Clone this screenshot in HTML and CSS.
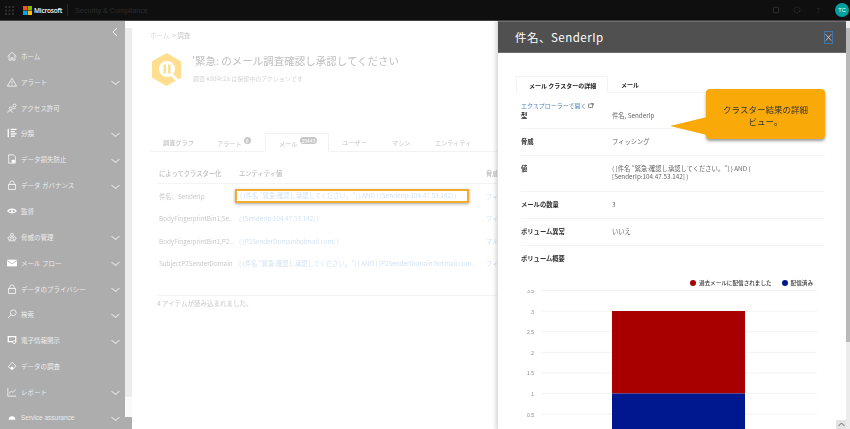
FILE: index.html
```html
<!DOCTYPE html>
<html lang="ja">
<head>
    <meta charset="UTF-8">
    <title>Security &amp; Compliance</title>
    <link rel="stylesheet" href="styles.css">
</head>
<body>
    <header class="topbar">
        <svg class="waffle" width="9" height="9" viewBox="0 0 9 9"><g fill="#2e2e2e"><rect width="2" height="2"/><rect x="3.500" width="2" height="2"/><rect x="7" width="2" height="2"/><rect y="3.500" width="2" height="2"/><rect x="3.500" y="3.500" width="2" height="2"/><rect x="7" y="3.500" width="2" height="2"/><rect y="7" width="2" height="2"/><rect x="3.500" y="7" width="2" height="2"/><rect x="7" y="7" width="2" height="2"/></g></svg>
        <svg class="ms-logo" width="9" height="9" viewBox="0 0 9 9"><rect width="4.300" height="4.300" fill="#f25022"/><rect x="4.700" width="4.300" height="4.300" fill="#7fba00"/><rect y="4.700" width="4.300" height="4.300" fill="#00a4ef"/><rect x="4.700" y="4.700" width="4.300" height="4.300" fill="#ffb900"/></svg>
        <span class="ms-name">Microsoft</span>
        <span class="top-sep"></span>
        <span class="app-name">Security &amp; Compliance</span>
        <div class="top-right">
            <svg width="8" height="8" viewBox="0 0 8 8"><circle cx="4" cy="4" r="3" fill="none" stroke="#2e2e2e"/></svg>
            <svg width="8" height="8" viewBox="0 0 8 8"><circle cx="4" cy="4" r="3" fill="none" stroke="#2e2e2e" stroke-dasharray="2 1"/></svg>
            <span class="help">?</span>
            <span class="avatar">TC</span>
        </div>
    </header>

    <div class="shell">
        <nav class="sidebar">
            <div class="collapse"><svg width="6" height="10" viewBox="0 0 6 10"><path d="M5 1L1 5l4 4" fill="none" stroke="#fff" stroke-width="1"/></svg></div>
            <ul class="nav">
                <li><svg viewBox="0 0 12 12"><path d="M.8 6.500L6 1.500l5.200 5M2.500 5.500v5.500h2.500V8h2v3h2.500V5.500"/></svg><span>ホーム</span></li>
                <li><svg viewBox="0 0 12 12"><path d="M6 1.500L11.500 11H.5zM6 5v3M6 9v1"/></svg><span>アラート</span><i class="chev"></i></li>
                <li><svg viewBox="0 0 12 12"><circle cx="4.500" cy="6.500" r="1.800"/><path d="M1 11.500c0-3 5-3 6 0"/><circle cx="9" cy="3" r="1.800"/><path d="M7 6.500h3"/></svg><span>アクセス許可</span></li>
                <li><svg viewBox="0 0 12 12"><path class="thick" d="M1.500 1v10M4.500 1.500h7M4.500 4.200h5M4.500 6.900h7M4.500 9.600h5"/></svg><span>分類</span><i class="chev"></i></li>
                <li><svg viewBox="0 0 12 12"><path d="M2 1h6l2 2v8H2z"/><rect class="solid" x="5.500" y="7" width="4" height="3.500"/></svg><span>データ損失防止</span><i class="chev"></i></li>
                <li><svg viewBox="0 0 12 12"><rect x="2" y="5.500" width="8" height="6"/><path d="M3.500 5.500V3.500a2.500 2.500 0 0 1 5 0v2"/></svg><span>データ ガバナンス</span><i class="chev"></i></li>
                <li><svg viewBox="0 0 12 12"><path class="thick" d="M1 6C3 3 9 3 11 6 9 9 3 9 1 6z"/><circle class="solid" cx="6" cy="6" r="1.200"/></svg><span>監督</span></li>
                <li><svg viewBox="0 0 12 12"><circle cx="6" cy="3.500" r="1.800"/><circle cx="3" cy="7.500" r="1.800"/><circle cx="9" cy="7.500" r="1.800"/><path d="M6 5.500v2M2 10.500h8"/></svg><span>脅威の管理</span><i class="chev"></i></li>
                <li><svg viewBox="0 0 12 12"><rect class="solid" y="2" width="12" height="8"/><path class="cut-line" d="M0 3l6 4 6-4"/></svg><span>メール フロー</span><i class="chev"></i></li>
                <li><svg viewBox="0 0 12 12"><rect x="2" y="5.500" width="8" height="6"/><path d="M3.500 5.500V3.500a2.500 2.500 0 0 1 5 0v2"/></svg><span>データのプライバシー</span><i class="chev"></i></li>
                <li><svg viewBox="0 0 12 12"><circle cx="7.500" cy="4.500" r="3.500"/><path d="M5 7L1 11"/></svg><span>検索</span><i class="chev"></i></li>
                <li><svg viewBox="0 0 12 12"><path class="thick" d="M1.500 2h9v6h-9z"/><circle class="knock" cx="8.500" cy="8.500" r="1.800"/></svg><span>電子情報開示</span><i class="chev"></i></li>
                <li><svg viewBox="0 0 12 12"><path d="M6 1.500L11 6l-4.500 4.500L1.500 7z"/><circle class="solid" cx="6" cy="8.500" r="1.800"/></svg><span>データの調査</span></li>
                <li><svg viewBox="0 0 12 12"><path d="M1 1v10h10M2.500 8l2.500-3 2 1.500L10.500 3"/></svg><span>レポート</span><i class="chev"></i></li>
                <li><svg viewBox="0 0 12 12"><path class="solid" d="M2 8a4 4 0 0 1 8 0z"/></svg><span class="cut">Service assurance</span><i class="chev"></i></li>
            </ul>
        </nav>
        <div class="side-scroll"></div>

        <main class="main">
            <div class="crumbs"><span class="crumb-home">ホーム</span> &nbsp;&gt; 調査</div>
            <div class="title-row">
                <svg class="hex" width="29" height="33" viewBox="0 0 29 33">
                    <path d="M14.500 0L29 8.250v16.500L14.500 33 0 24.750V8.250z" fill="#ffdf8f"/>
                    <circle cx="15" cy="16" r="8" fill="#fff"/>
                    <path d="M20 22l5 5" stroke="#fff" stroke-width="3"/>
                    <rect x="11.500" y="11.500" width="2.500" height="9" fill="#ffdf8f"/>
                    <rect x="16" y="11.500" width="2.500" height="9" fill="#ffdf8f"/>
                </svg>
                <div class="title-text">
                    <h1>'緊急: のメール調査確認し承認してください</h1>
                    <p class="subtitle">調査 #8d4c2a は保留中のアクションです</p>
                </div>
            </div>

            <div class="tabs">
                <span class="tab tab-graph">調査グラフ</span>
                <span class="tab tab-alert">アラート<b class="badge">0</b></span>
                <span class="tab tab-mail">メール<b class="badge">29443</b></span>
                <span class="tab tab-user">ユーザー</span>
                <span class="tab tab-machine">マシン</span>
                <span class="tab">エンティティ</span>
            </div>

            <div class="grid">
                <div class="grid-row grid-head"><span>によってクラスター化</span><span>エンティティ値</span><span>脅威</span></div>
                <div class="grid-row grid-first"><span>件名、SenderIp</span><a class="hl">( [件名 "緊急:確認し承認してください。"] ) AND ( [SenderIp:104.47.53.142] )</a><a>フィッシング</a></div>
                <div class="grid-row"><span>BodyFingerprintBin1,Se...</span><a>( [SenderIp:104.47.53.142] )</a><a>フィッシング</a></div>
                <div class="grid-row"><span>BodyFingerprintBin1,P2...</span><a>( [P2SenderDomainhotmail.com] )</a><a>マルウェア</a></div>
                <div class="grid-row"><span>SubjectP2SenderDomain</span><a>( [件名 "緊急:確認し承認してください。"] ) AND ( [P2SenderDomain.hotmail.com...</a><a>フィッシング</a></div>
            </div>
            <div class="loaded">4 アイテムが読み込まれました。</div>
        </main>

        <aside class="panel">
            <div class="panel-head">
                <h2>件名、SenderIp</h2>
                <span class="close"><svg width="9" height="11" viewBox="0 0 9 11"><path d="M1 1.500l7 8M8 1.500l-7 8" stroke="#ddd" fill="none"/></svg></span>
            </div>
            <div class="panel-body">
                <div class="ptabs">
                    <span class="ptab ptab-on">メール クラスターの詳細</span>
                    <span class="ptab">メール</span>
                </div>
                <a class="explore">エクスプローラーで開く <svg width="6" height="5" viewBox="0 0 6 5"><path d="M.5 1h4v3.500h-4zM3 .5h2.500v2" fill="none" stroke="#666" stroke-width=".7"/></svg></a>
                <div class="prow prow-type"><b>型</b><span>件名, SenderIp</span></div>
                <div class="prow prow-threat"><b>脅威</b><span>フィッシング</span></div>
                <div class="prow prow-value"><b>値</b><span>( [件名 "緊急:確認し承認してください。"] ) AND ( [SenderIp:104.47.53.142] )</span></div>
                <div class="prow"><b>メールの数量</b><span>3</span></div>
                <div class="prow"><b>ボリューム異常</b><span>いいえ</span></div>
                <div class="prow prow-last"><b>ボリューム概要</b></div>
                <div class="legend">
                    <i class="dot dot-red"></i><span>過去メールに配信されました</span>
                    <i class="dot dot-blue"></i><span>配信済み</span>
                </div>
                <svg class="chart" width="300" height="150" viewBox="0 0 300 150">
                    <g stroke="#f2f2f2">
                        <path d="M20 .5h276M20 21.100h276M20 41.700h276M20 62.300h276M20 83h276M20 103.500h276M20 124.100h276"/>
                    </g>
                    <g class="ticks" text-anchor="end">
                        <text x="13" y="3">3.5</text>
                        <text x="13" y="24">3</text>
                        <text x="13" y="44">2.5</text>
                        <text x="13" y="65">2</text>
                        <text x="13" y="85">1.5</text>
                        <text x="13" y="106">1</text>
                        <text x="13" y="127">0.5</text>
                    </g>
                    <rect x="91" y="21" width="133" height="82.500" fill="#a80000"/>
                    <rect x="91" y="103.500" width="133" height="50" fill="#00188f"/>
                </svg>
            </div>
            <div class="panel-scroll">
                <span class="scroll-thumb"></span>
            </div>
            <span class="scroll-up"><svg width="7" height="5" viewBox="0 0 7 5"><path d="M.5 4l3-3 3 3" fill="none" stroke="#666"/></svg></span>
        </aside>

        <div class="callout">
            <svg class="callout-tail" width="37" height="18" viewBox="0 0 37 18"><path d="M37 0L0 9l37 9z" fill="#f9a908"/></svg>
            クラスター結果の詳細ビュー。
        </div>
    </div>
</body>
</html>
```

FILE: styles.css
```css
* {
    box-sizing: border-box;
}

html, body {
    margin: 0;
    height: 429px;
    overflow: hidden;
}

body {
    font-family: "Noto Sans CJK JP", "Noto Sans", sans-serif;
    font-size: 6.500px;
    background: #fff;
    display: flex;
    flex-direction: column;
    filter: blur(0.45px);
}

/* top bar */
.topbar {
    height: 21px;
    flex: none;
    background: #0f0f0f;
    border-bottom: 1px solid #444;
    display: flex;
    align-items: center;
    padding-left: 5px;
    color: #fff;
}

.ms-logo {
    margin-left: 9px;
}

.ms-name {
    font-family: "Open Sans", sans-serif;
    font-weight: 600;
    font-size: 6.500px;
    margin-left: 2px;
    letter-spacing: -0.2px;
}

.top-sep {
    width: 1px;
    height: 12px;
    background: #262626;
    margin: 0 7px 0 5px;
}

.app-name {
    font-family: "Liberation Sans", sans-serif;
    font-size: 7.200px;
    color: #2c2c2c;
}

.top-right {
    margin-left: auto;
    display: flex;
    align-items: center;
    gap: 13px;
    padding-right: 1px;
}

.help {
    color: #2e2e2e;
    width: 8px;
    text-align: center;
}

.avatar {
    width: 14px;
    height: 14px;
    border-radius: 50%;
    background: #00a09d;
    font-family: "Liberation Sans", sans-serif;
    font-size: 5.500px;
    line-height: 14px;
    text-align: center;
}

.shell {
    flex: 1;
    display: flex;
    position: relative;
    min-height: 0;
}

/* left nav */
.sidebar {
    width: 125px;
    flex: none;
    background: #adadad;
    color: #ececec;
    overflow: hidden;
}

.collapse {
    height: 22px;
    padding: 6px 0 0 112px;
}

.nav {
    list-style: none;
    margin: 0;
    padding: 0;
}

.nav li {
    height: 25.850px;
    display: flex;
    align-items: center;
    padding-left: 7px;
    font-size: 6.500px;
    white-space: nowrap;
}

.nav svg {
    width: 10px;
    height: 10px;
    flex: none;
    margin-right: 4px;
    fill: none;
    stroke: #fff;
    stroke-width: 0.9;
}

.nav svg .solid {
    fill: #fff;
    stroke: none;
}

.nav svg .thick {
    stroke-width: 1.500;
}

.nav svg .knock {
    fill: #adadad;
}

.nav svg .cut-line {
    stroke: #adadad;
}

.cut {
    font-family: "Liberation Sans", sans-serif;
    font-size: 6.500px;
}

.chev {
    margin-left: auto;
    margin-right: 7px;
    width: 5px;
    height: 5px;
    border-right: 1px solid #ddd;
    border-bottom: 1px solid #ddd;
    transform: scaleX(1.25) rotate(45deg);
}

.side-scroll {
    width: 7px;
    flex: none;
    background: linear-gradient(#fff 0, #fff 7px, #ececec 7px, #ececec 376px, #fafafa 376px, #fafafa 396px, #adadad 396px);
}

/* main page, faded by the overlay */
.main {
    flex: 1;
    min-width: 0;
    padding: 8px 0 0 18px;
    color: #c9c9c9;
    overflow: hidden;
}

.crumbs {
    font-size: 6.500px;
    line-height: 12px;
}

.crumb-home {
    color: #d3d8e6;
}

.title-row {
    display: flex;
    gap: 11px;
    margin: 6px 0 0 2px;
    height: 87px;
}

.hex {
    flex: none;
    margin-top: 6px;
}

.title-text {
    margin-top: 4px;
}

h1 {
    margin: 0;
    font-size: 10.500px;
    font-weight: 400;
    line-height: 20px;
    color: #c0c0c0;
    white-space: nowrap;
}

.subtitle {
    margin: 3px 0 0 1px;
    font-size: 6px;
    line-height: 10px;
    color: #d4d4d4;
}

.tabs {
    height: 18px;
    display: flex;
    align-items: center;
    border-bottom: 1px solid #f2f2f2;
    font-size: 6.200px;
    white-space: nowrap;
}

.tab {
    color: #c4c4c4;
}

.tab-graph {
    margin-left: 13px;
    width: 54px;
    font-weight: 500;
}

.tab-alert {
    width: 48px;
}

.tab-mail {
    width: 64px;
    height: 19px;
    line-height: 19px;
    padding-left: 13px;
    border: 1px solid #f2f2f2;
    border-bottom-color: #fff;
    margin-right: 13px;
}

.tab-user {
    width: 50px;
}

.tab-machine {
    width: 43px;
}

.badge {
    display: inline-block;
    background: #c8c8c8;
    color: #fff;
    font-size: 5px;
    font-weight: 400;
    line-height: 7px;
    padding: 0 2px;
    border-radius: 4px;
    margin-left: 2px;
    vertical-align: 3px;
}

.grid {
    padding-left: 9px;
    margin-top: 11px;
}

.grid-row {
    display: grid;
    grid-template-columns: 80px 247px 80px;
    height: 22.500px;
    align-items: center;
    font-size: 6.300px;
    white-space: nowrap;
}

.grid-row a {
    color: #d3e2f3;
}

.grid-row > span:first-child {
    overflow: hidden;
}

.grid-head {
    height: 21px;
    margin-left: -2px;
    padding-left: 2px;
    border-bottom: 1px solid #f4f4f4;
    font-weight: 500;
    color: #bdbdbd;
}

.grid-first {
    margin-top: 1px;
}

.hl {
    justify-self: start;
    height: 14px;
    width: 234px;
    line-height: 10px;
    margin-left: -4px;
    padding-left: 3px;
    border: 2px solid #f0ad30;
    box-shadow: 0 1px 3px rgba(0, 0, 0, 0.35);
    background: #fff;
    overflow: hidden;
}

.loaded {
    margin: 20px 0 0 7px;
    border-top: 1px solid #f4f4f4;
    padding-top: 1px;
    line-height: 12px;
    font-size: 6.500px;
}

/* details panel */
.panel {
    width: 353px;
    flex: none;
    position: relative;
    border-left: 1px solid #ddd;
    background: #fff;
    box-shadow: -2px 0 3px rgba(0, 0, 0, 0.12);
    overflow: hidden;
}

.panel-head {
    height: 32px;
    background: #505050;
    display: flex;
    align-items: center;
    justify-content: space-between;
    padding: 0 13px 0 17px;
    margin-right: 4px;
    color: #fff;
    border-top: 1px solid #6e6e6e;
    border-bottom: 1px solid #6e6e6e;
}

h2 {
    margin: 0;
    font-size: 11.500px;
    font-weight: 400;
    letter-spacing: 0.500px;
}

.close {
    width: 9px;
    height: 13px;
    border: 1px solid #3f76a8;
    display: flex;
    align-items: center;
    justify-content: center;
}

.panel-body {
    padding: 23px 25px 0 23px;
    color: #666;
}

.ptabs {
    height: 17px;
    display: flex;
    align-items: center;
    border-bottom: 1px solid #f4f4f4;
    margin-left: -5px;
    color: #222;
    font-weight: 700;
    font-size: 6px;
}

.ptab {
    padding: 0 0 0 13px;
}

.ptab-on {
    width: 92px;
    height: 17px;
    line-height: 17px;
    padding-left: 12px;
    border: 1px solid #f2f2f2;
    border-bottom-color: #fff;
}

.explore {
    display: block;
    color: #4b85c5;
    font-size: 6px;
    line-height: 9px;
    margin-top: 8px;
}

.prow {
    display: grid;
    grid-template-columns: 91px 1fr;
    border-bottom: 1px solid #f4f4f4;
    padding: 7px 0 8px;
    line-height: 12px;
    font-size: 6.300px;
    height: 27px;
}

.prow b {
    color: #333;
    font-weight: 700;
}

.prow-type {
    height: 19px;
    padding: 0;
}

.prow-value {
    height: 36px;
    line-height: 8px;
    padding-top: 9px;
}

.prow-value span {
    max-width: 145px;
}

.prow-last {
    border-bottom: 0;
}

.legend {
    display: flex;
    justify-content: flex-end;
    align-items: center;
    gap: 3px;
    height: 10px;
    margin-top: 5px;
    color: #333;
    font-size: 5.600px;
    font-weight: 500;
    padding-right: 12px;
}

.dot {
    width: 6px;
    height: 6px;
    border-radius: 50%;
}

.dot-red {
    background: #a80000;
}

.dot-blue {
    background: #00188f;
    margin-left: 7px;
}

.chart {
    display: block;
    margin-top: 2px;
    overflow: hidden;
}

.ticks {
    font-family: "Liberation Sans", sans-serif;
    font-size: 5px;
    fill: #888;
}

.panel-scroll {
    position: absolute;
    top: 0;
    right: 0;
    bottom: 0;
    width: 4px;
    background: #ececec;
}

.scroll-thumb {
    display: block;
    height: 314px;
    margin-top: 7px;
    background: #b9b9b9;
}

.scroll-up {
    position: absolute;
    right: 4px;
    bottom: 0;
    width: 10px;
    height: 9px;
    background: #e4e4e4;
    display: flex;
    align-items: center;
    justify-content: center;
}

/* tutorial callout over the panel */
.callout {
    position: absolute;
    left: 706px;
    top: 68px;
    width: 119px;
    height: 50px;
    padding: 14px 16px 0;
    background: #f9a908;
    border-radius: 4px;
    box-shadow: 0 2px 3px rgba(60, 60, 60, 0.5);
    color: #333;
    font-size: 8.500px;
    line-height: 12px;
    text-align: center;
}

.callout-tail {
    position: absolute;
    left: -36px;
    top: 28px;
}
```
